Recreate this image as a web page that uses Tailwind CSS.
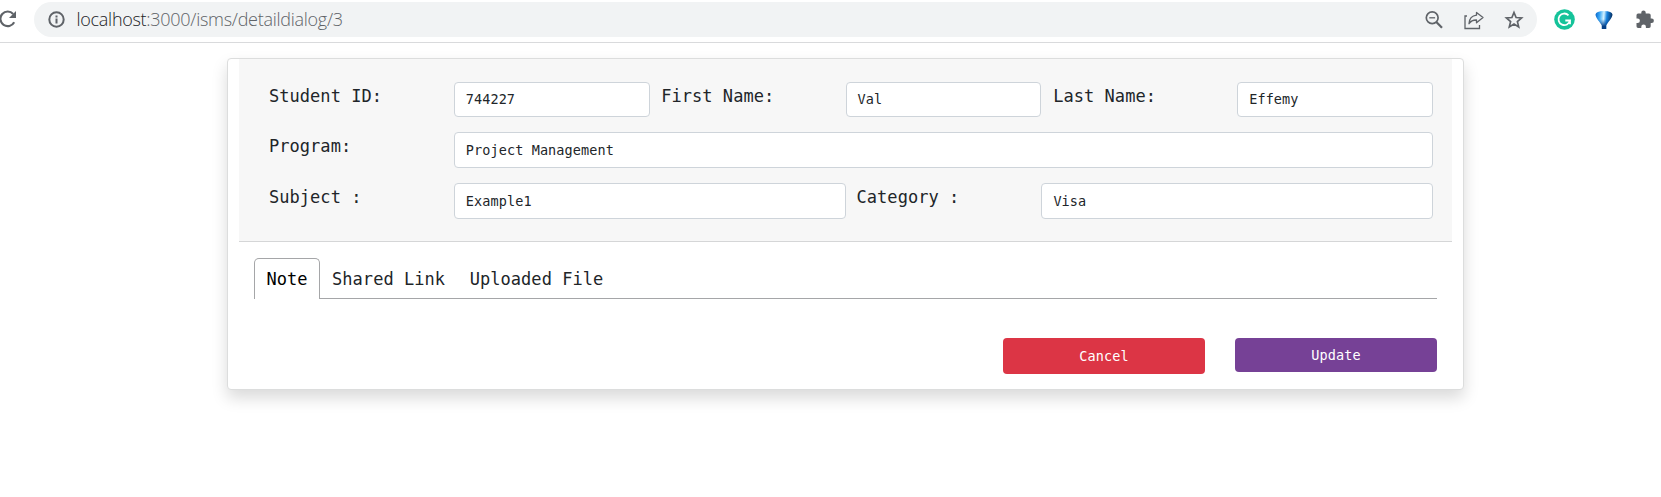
<!DOCTYPE html>
<html lang="en"><head><meta charset="utf-8"><title>Detail dialog</title>
<script src="https://cdn.jsdelivr.net/npm/@tailwindcss/browser@4"></script></head>
<body class="bg-white w-[1661px] h-[497px] overflow-hidden font-['DejaVu_Sans_Mono',monospace] text-[#212529]">
<header class="flex h-[43px] border-b border-[#d9dadc] pt-[2px] overflow-hidden">
  <svg class="w-[34px] h-[35px] shrink-0" viewBox="0 2 34 35" fill="none"><path d="M14.2 22.200A7.300 7.300 0 1 1 13.200 14" stroke="#5f6368" stroke-width="2.100"/><path d="M16 11v7H9z" fill="#5f6368"/></svg>
  <div class="flex items-center w-[1503px] h-[35px] rounded-full bg-[#f1f3f4] pl-[14px] pr-[13px] shrink-0">
    <svg class="w-[17px] h-[17px]" viewBox="0 0 17 17" fill="none" stroke="#5f6368" stroke-width="2"><circle cx="8.5" cy="8.5" r="7.2"/><path d="M8.5 7.6v4.9M8.5 4.4v2"/></svg>
    <div class="ml-[11.5px] pb-px font-['Open_Sans',sans-serif] font-light text-[18px] leading-6 tracking-[-0.28px] whitespace-nowrap text-[#5f6368]"><span class="text-[#202124]">localhost</span>:3000/isms/detaildialog/3</div>
    <div class="ml-auto flex items-center gap-[20px] text-[#5f6368]">
      <svg class="w-[20px] h-[20px]" viewBox="0 0 20 20" fill="none" stroke="currentColor" stroke-width="1.7"><circle cx="8.2" cy="7.800" r="5.900"/><path d="M5.300 7.800h5.800" stroke-width="1.300"/><path d="m12.300 12 5.700 5.800" stroke-width="2.200"/></svg>
      <svg class="w-[20px] h-[20px]" viewBox="0 0 20 20" fill="none" stroke="currentColor" stroke-width="1.300"><path d="M3 6H1v12.500h14.500V15"/><path d="M12.500 2.500 19 7.500l-6.500 5.300V10C9 9.900 6.800 11 5 13.700c.3-4.800 3.200-8 7.500-8.500z" stroke-linejoin="round"/></svg>
      <svg class="w-[20px] h-[20px]" viewBox="0 0 20 20" fill="none" stroke="currentColor" stroke-width="1.700"><path d="m10 2.500 2.100 5 5.500.5-4.200 3.600 1.300 5.300-4.700-2.800-4.700 2.800 1.300-5.300L2.400 8l5.500-.5z"/></svg>
    </div>
  </div>
  <div class="flex items-center h-[35px] pl-[17px] gap-[20px] shrink-0">
    <svg class="w-[21px] h-[21px]" viewBox="0 0 21 21" fill="none"><circle cx="10.5" cy="10.500" r="10.300" fill="#15c39a"/><path d="M14.500 6.300A5.800 5.800 0 1 0 16 11.500H11.300M16 11.500v3.800" stroke="#fff" stroke-width="1.800"/></svg>
    <svg class="w-[18px] h-[20px]" viewBox="0 0 18 20"><defs><linearGradient id="g" x1="0" x2="1" y1=".1" y2=".2"><stop offset="0" stop-color="#0b66c8"/><stop offset=".25" stop-color="#38a6f5"/><stop offset=".5" stop-color="#d5f3ff"/><stop offset=".68" stop-color="#1683e0"/><stop offset="1" stop-color="#062e60"/></linearGradient><linearGradient id="s" x1="0" x2="0" y1="0" y2="1"><stop offset=".45" stop-color="#0757b0" stop-opacity="0"/><stop offset=".85" stop-color="#053f86"/></linearGradient></defs><path d="M.5 4.500Q1 1 9 1t8.500 3.500C17.500 8 12.500 12.500 11.200 15.500V19H6.800v-3.500C5.500 12.500.5 8 .5 4.500Z" fill="url(#g)"/><path d="M.5 4.500Q1 1 9 1t8.500 3.500C17.500 8 12.500 12.500 11.200 15.500V19H6.800v-3.500C5.500 12.500.5 8 .5 4.500Z" fill="url(#s)"/></svg>
    <svg class="w-[18px] h-[19px] ml-[3px]" viewBox="0 0 18 19" fill="#5f6368"><path d="M15.700 8.500h-1V5.200a1.700 1.700 0 0 0-1.700-1.700H9.700V2.600a2.200 2.200 0 0 0-4.400 0v.9H2.100A1.700 1.700 0 0 0 .5 5.200v3.200h1.100a2.300 2.300 0 0 1 0 4.600H.5v3.200a1.700 1.700 0 0 0 1.600 1.700h3.200v-1.100a2.300 2.300 0 0 1 4.600 0v1.100H13a1.700 1.700 0 0 0 1.700-1.700v-3.300h1a2.200 2.200 0 0 0 0-4.400z"/></svg>
  </div>
</header>
<main class="mt-[15px] ml-[227px] w-[1237px] h-[332px] rounded border border-[#dcdddd] bg-white px-[11px] shadow-[0_8px_16px_rgba(0,0,0,0.15)]">
  <section class="h-[183px] bg-[#f7f7f7] border-b border-[#d5d6d7] pl-[19px] pr-[18.9px] pt-[23px]">
    <div class="grid grid-cols-12 gap-y-[15px] text-[17px] leading-[28px] tracking-[0.04px]">
      <label class="col-span-2 pl-[11px]">Student ID:</label>
      <div class="col-span-2 h-[35px] rounded border border-[#ced4da] bg-white pl-[11px] text-[13.5px] leading-[33px] tracking-[0.07px]">744227</div>
      <label class="col-span-2 pl-[11.5px]">First Name:</label>
      <div class="col-span-2 h-[35px] rounded border border-[#ced4da] bg-white pl-[11px] text-[13.5px] leading-[33px] tracking-[0.07px]">Val</div>
      <label class="col-span-2 pl-[11.8px]">Last Name:</label>
      <div class="col-span-2 h-[35px] rounded border border-[#ced4da] bg-white pl-[11px] text-[13.5px] leading-[33px] tracking-[0.07px]">Effemy</div>
      <label class="col-span-2 pl-[11px]">Program:</label>
      <div class="col-span-10 h-[36px] rounded border border-[#ced4da] bg-white pl-[11px] text-[13.5px] leading-[34px] tracking-[0.1px]">Project Management</div>
      <label class="col-span-2 pl-[11px]">Subject :</label>
      <div class="col-span-4 h-[36px] rounded border border-[#ced4da] bg-white pl-[11px] text-[13.5px] leading-[34px] tracking-[0.1px]">Example1</div>
      <label class="col-span-2 pl-[11px]">Category :</label>
      <div class="col-span-4 h-[36px] rounded border border-[#ced4da] bg-white pl-[11px] text-[13.5px] leading-[34px] tracking-[0.07px]">Visa</div>
    </div>
  </section>
  <nav class="mt-[16px] ml-[15px] mr-[15px] flex h-[41px] text-[17px] leading-[40px] tracking-[0.05px] whitespace-pre">
    <div class="w-[66px] rounded-t-[5px] border border-b-0 border-[#a5a6a8] pl-[11.5px] text-black">Note</div>
    <div class="flex flex-1 border-b border-[#a5a6a8] pl-[12px] gap-[24.5px] pt-px"><span>Shared Link</span><span>Uploaded File</span></div>
  </nav>
  <div class="mt-[39px] mr-[15px] flex justify-end items-start gap-[30px] text-[13.5px] tracking-[0.1px] text-white">
    <button class="w-[202px] h-[36px] rounded bg-[#dc3545]">Cancel</button>
    <button class="w-[202px] h-[34px] rounded bg-[#764196]">Update</button>
  </div>
</main>
</body></html>
